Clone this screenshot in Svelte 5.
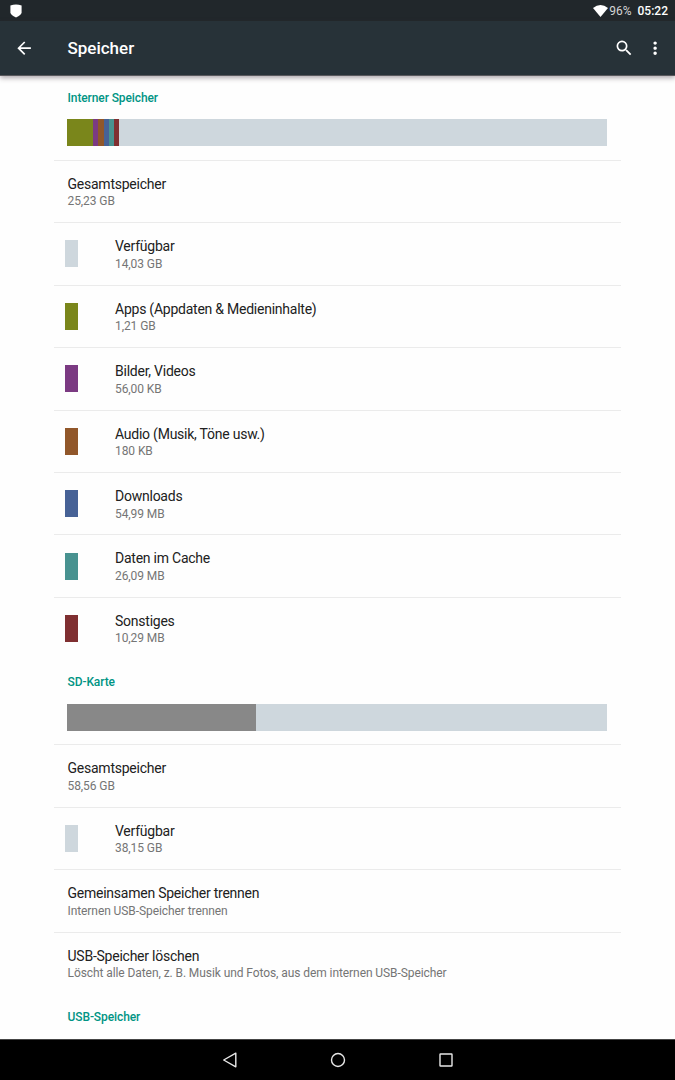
<script>
  const internal = [
    { title: 'Gesamtspeicher', sub: '25,23 GB' },
    { title: 'Verfügbar', sub: '14,03 GB', color: '#ced7dd' },
    { title: 'Apps (Appdaten & Medieninhalte)', sub: '1,21 GB', color: '#7a861b' },
    { title: 'Bilder, Videos', sub: '56,00 KB', color: '#7b3a82' },
    { title: 'Audio (Musik, Töne usw.)', sub: '180 KB', color: '#91572a' },
    { title: 'Downloads', sub: '54,99 MB', color: '#476296' },
    { title: 'Daten im Cache', sub: '26,09 MB', color: '#489290' },
    { title: 'Sonstiges', sub: '10,29 MB', color: '#7f2f31' }
  ];
  const card = [
    { title: 'Gesamtspeicher', sub: '58,56 GB' },
    { title: 'Verfügbar', sub: '38,15 GB', color: '#ced7dd' },
    { title: 'Gemeinsamen Speicher trennen', sub: 'Internen USB-Speicher trennen' },
    { title: 'USB-Speicher löschen', sub: 'Löscht alle Daten, z. B. Musik und Fotos, aus dem internen USB-Speicher' }
  ];
  const sections = [
    {
      name: 'Interner Speicher',
      rows: internal,
      usage: [
        { color: '#7a861b', width: 26 },
        { color: '#7b3a82', width: 5.1 },
        { color: '#91572a', width: 5.1 },
        { color: '#476296', width: 5.1 },
        { color: '#489290', width: 5.1 },
        { color: '#7f2f31', width: 5.1 }
      ]
    },
    { name: 'SD-Karte', rows: card, usage: [{ color: '#888888', width: 188.5 }] }
  ];
</script>

<div class="screen">
  <div class="status">
    <svg class="shield" width="12" height="14" viewBox="0 0 12 14"><path d="M.4 1.5Q6-.5 11.6 1.5V8.5Q11.4 11 6 13.4Q.6 11 .4 8.5Z" fill="#fff" /></svg>
    <svg class="wifi" width="15" height="12" viewBox="0 0 15 12"><path d="M0 3Q7.5-2.8 15 3L7.5 12Z" fill="#fff" /></svg>
    <span class="battery">96%</span>
    <span class="clock">05:22</span>
  </div>
  <header>
    <svg class="back" width="20.25" height="20.25" viewBox="0 0 24 24"><path d="M20 11H7.83l5.59-5.59L12 4l-8 8 8 8 1.41-1.41L7.83 13H20v-2z" fill="#fff" /></svg>
    <h1>Speicher</h1>
    <svg class="search" width="20.25" height="20.25" viewBox="0 0 24 24"><path d="M15.5 14h-.79l-.28-.27A6.47 6.47 0 0 0 16 9.5 6.5 6.5 0 1 0 9.5 16c1.61 0 3.09-.59 4.23-1.57l.27.28v.79l5 4.99L20.49 19l-4.99-5zm-6 0C7.01 14 5 11.99 5 9.5S7.01 5 9.5 5 14 7.01 14 9.5 11.99 14 9.5 14z" fill="#fff" /></svg>
    <svg class="more" width="20.25" height="20.25" viewBox="0 0 24 24"><path d="M12 8c1.1 0 2-.9 2-2s-.9-2-2-2-2 .9-2 2 .9 2 2 2zm0 2c-1.1 0-2 .9-2 2s.9 2 2 2 2-.9 2-2-.9-2-2-2zm0 6c-1.1 0-2 .9-2 2s.9 2 2 2 2-.9 2-2-.9-2-2-2z" fill="#fff" /></svg>
  </header>

  <main>
    {#each sections as section}
      <section>
        <h2>{section.name}</h2>
        <div class="bar">
          {#each section.usage as part}
            <i style="width: {part.width}px; background: {part.color}"></i>
          {/each}
        </div>
        {#each section.rows as row}
          <div class="row">
            {#if row.color}
              <i class="swatch" style="background: {row.color}"></i>
            {/if}
            <div class="text">
              <div class="title">{row.title}</div>
              <div class="sub">{row.sub}</div>
            </div>
          </div>
        {/each}
      </section>
    {/each}
    <h2>USB-Speicher</h2>
  </main>

  <nav>
    <svg width="18" height="18" viewBox="0 0 18 18"><path d="M2.7 9L14.8 2.2V15.8Z" /></svg>
    <svg width="18" height="18" viewBox="0 0 18 18"><circle cx="9" cy="9" r="6.5" /></svg>
    <svg width="18" height="18" viewBox="0 0 18 18"><rect x="3" y="3" width="12" height="12" rx=".5" /></svg>
  </nav>
</div>

<style>
  .screen {
    display: flex;
    flex-direction: column;
    width: 675px;
    height: 1080px;
    overflow: hidden;
    background: #fefefe;
    font-family: Roboto, sans-serif;
  }
  .status {
    display: flex;
    flex: none;
    align-items: center;
    height: 21px;
    padding: 0 7px 0 10px;
    background: #21272b;
    color: #fff;
    font-size: 12px;
  }
  .wifi { margin-left: auto; }
  .battery { margin-left: 1.5px; color: #d3d4d5; }
  .clock { margin-left: 6px; font-weight: 500; }
  header {
    display: flex;
    flex: none;
    align-items: center;
    box-sizing: border-box;
    height: 55px;
    padding: 0 10px 0 13.5px;
    border-bottom: 1px solid #59595d;
    background: #273238;
    box-shadow: 0 2px 5px rgba(60, 45, 55, 0.42);
    z-index: 1;
  }
  h1 {
    flex: 1;
    margin: 0 0 0 33.7px;
    color: #fff;
    font-size: 17px;
    font-weight: 500;
  }
  .more { margin-left: 10.5px; }
  main {
    flex: 1;
    margin-top: -1px;
    padding: 0 54px;
    min-height: 0;
    overflow: hidden;
  }
  h2 {
    margin: 0;
    padding: 14.6px 0 0 13.5px;
    height: 29.8px;
    color: #009484;
    font-size: 12px;
    letter-spacing: -0.1px;
    font-weight: 500;
    line-height: 16px;
  }
  .bar {
    display: flex;
    width: 540px;
    height: 27px;
    margin: 0 0 13.3px 13.4px;
    background: #ced7dd;
  }
  section + section .bar { margin-bottom: 13.6px; }
  .row {
    display: flex;
    align-items: center;
    box-sizing: border-box;
    height: 62.46px;
    border-top: 1px solid #ebebeb;
    padding-left: 13.5px;
  }
  .swatch {
    width: 13.5px;
    height: 27px;
    margin: 0 37px 0 -3px;
  }
  .text { padding-top: 3.2px; }
  .title {
    color: #212121;
    font-size: 14px;
    letter-spacing: -0.24px;
    line-height: 17.5px;
  }
  .sub {
    color: #757575;
    font-size: 12px;
    letter-spacing: -0.08px;
    line-height: 17px;
  }
  nav {
    display: flex;
    flex: none;
    align-items: center;
    justify-content: center;
    gap: 90px;
    height: 41px;
    box-sizing: border-box;
    border-top: 1px solid #454545;
    background: #000;
  }
  nav svg {
    fill: none;
    stroke: #e8e8e8;
    stroke-width: 1.4;
    stroke-linejoin: round;
  }
</style>
